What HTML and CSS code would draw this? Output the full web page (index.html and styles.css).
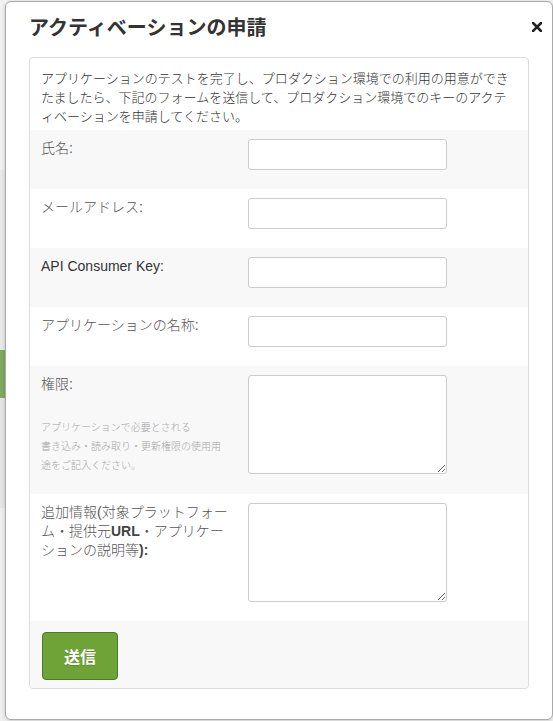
FILE: index.html
```html
<!DOCTYPE html>
<html lang="ja">
<head>
<meta charset="utf-8">
<title>アクティベーションの申請</title>
<link rel="stylesheet" href="styles.css">
</head>
<body>
<div class="page">
  <div class="page-block page-a"></div>
  <div class="page-block page-b"></div>
  <div class="page-block page-green"></div>
  <div class="page-block page-c"></div>
  <div class="page-block page-d"></div>
</div>

<div class="modal">
  <div class="modal-header">
    <h3 class="modal-title">アクティベーションの申請</h3>
  </div>
  <span class="close" aria-label="閉じる">
    <svg width="10" height="10" viewBox="0 0 10 10"><path d="M1 1 L9 9 M9 1 L1 9" stroke="#222" stroke-width="2.6" stroke-linecap="square"/></svg>
  </span>

  <form class="well">
    <p class="intro">アプリケーションのテストを完了し、プロダクション環境での利用の用意ができ<br>たましたら、下記のフォームを送信して、プロダクション環境でのキーのアクテ<br>ィベーションを申請してください。</p>

    <div class="row alt">
      <label class="label">氏名:</label>
      <input class="field" type="text">
    </div>
    <div class="row">
      <label class="label">メールアドレス:</label>
      <input class="field" type="text">
    </div>
    <div class="row alt">
      <label class="label latin">API Consumer Key:</label>
      <input class="field" type="text">
    </div>
    <div class="row">
      <label class="label">アプリケーションの名称:</label>
      <input class="field" type="text">
    </div>
    <div class="row alt">
      <div class="label">
        <div>権限:</div>
        <div class="hint">アプリケーションで必要とされる<br>書き込み・読み取り・更新権限の使用用<br>途をご記入ください。</div>
      </div>
      <textarea class="field area"></textarea>
    </div>
    <div class="row">
      <label class="label">追加情報(対象プラットフォー<br>ム・提供元<b>URL</b>・アプリケー<br>ションの説明等<b>):</b></label>
      <textarea class="field area"></textarea>
    </div>
    <div class="actions">
      <button class="btn" type="button">送信</button>
    </div>
  </form>
</div>
</body>
</html>
```

FILE: styles.css
```css
html, body {
  margin: 0;
  padding: 0;
}

body {
  width: 553px;
  height: 721px;
  overflow: hidden;
  background: #f3f3f3;
  font-family: "Liberation Sans", "Noto Sans CJK JP", sans-serif;
  color: #333;
  position: relative;
}

.page {
  display: flex;
  flex-direction: column;
  width: 5px;
}

.page-block {
  width: 5px;
}

.page-a {
  height: 170px;
  background: #f1f1f1;
}

.page-b {
  height: 180px;
  background: #e9e9e9;
}

.page-green {
  height: 48px;
  background: #82a95f;
}

.page-c {
  height: 110px;
  background: #e6e6e6;
}

.page-d {
  height: 213px;
  background: #efefef;
}

.modal {
  position: absolute;
  left: 5px;
  top: 1px;
  width: 548px;
  height: 719px;
  box-sizing: border-box;
  background: #fff;
  border: 1px solid #a9a9a9;
  border-radius: 6px;
  box-shadow: 0 1px 4px rgba(0, 0, 0, 0.18);
  padding: 12px 23px 0;
}

.modal-header {
  height: 28px;
  margin-bottom: 15px;
  display: flex;
  align-items: center;
}

.modal-title {
  margin: 0;
  font-size: 20px;
  line-height: 28px;
  font-weight: bold;
  color: #333;
}

.close {
  position: absolute;
  right: 10px;
  top: 20px;
  width: 10px;
  height: 10px;
  display: block;
}

.close svg {
  display: block;
}

.well {
  margin: 0;
  border: 1px solid #dcdcdc;
  border-radius: 4px;
  background: #fff;
  overflow: hidden;
}

.intro {
  margin: 0;
  padding: 11px 11px 4px;
  font-size: 13px;
  line-height: 19px;
  font-weight: 300;
  color: #333;
  white-space: nowrap;
}

.row {
  display: flex;
  align-items: flex-start;
  padding: 9px 11px 19px;
  background: #fff;
}

.row.alt {
  background: #f8f8f8;
}

.label {
  width: 207px;
  flex: none;
  font-size: 14px;
  line-height: 19px;
  font-weight: 300;
  color: #555;
  white-space: nowrap;
}

.label b {
  font-weight: bold;
  color: #444;
}

.label.latin {
  color: #333;
  font-weight: normal;
}

.hint {
  margin-top: 24px;
  font-size: 10px;
  line-height: 19px;
  color: #a6a6a6;
}

.field {
  display: block;
  box-sizing: border-box;
  width: 199px;
  height: 31px;
  margin: 0;
  padding: 4px 6px;
  border: 1px solid #cccccc;
  border-radius: 3px;
  background: #fff;
  font: inherit;
  font-size: 13px;
}

.area {
  height: 99px;
}

.actions {
  background: #f8f8f8;
  padding: 11px 11px 8px 12px;
}

.btn {
  display: block;
  width: 76px;
  height: 48px;
  box-sizing: border-box;
  border: 1px solid #4d7a28;
  border-radius: 4px;
  background: #6ea338;
  color: #fff;
  font-family: "Liberation Sans", "Noto Sans CJK JP", sans-serif;
  font-size: 16px;
  font-weight: bold;
  text-shadow: 0 1px 0 rgba(0, 0, 0, 0.15);
  padding: 0;
}
```
